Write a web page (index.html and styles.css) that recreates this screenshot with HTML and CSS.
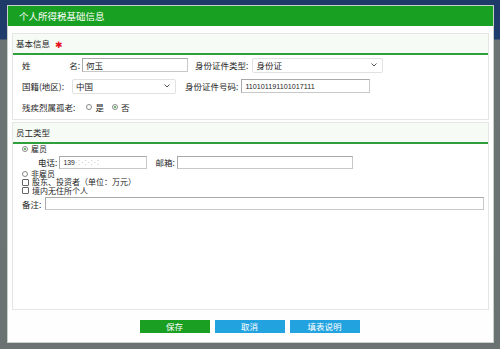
FILE: index.html
```html
<!DOCTYPE html>
<html lang="zh">
<head>
<meta charset="utf-8">
<title>个人所得税基础信息</title>
<link rel="stylesheet" href="styles.css">
</head>
<body>
<div class="dialog">
  <div class="dlg-head">个人所得税基础信息</div>
  <div class="dlg-body">
    <section class="panel panel-basic">
      <div class="panel-title">基本信息 <span class="req">✱</span></div>
      <div class="panel-content">
        <div class="row">
          <span class="lbl lbl-name"><span>姓</span><span>名:</span></span>
          <span class="field f-name">何玉</span>
          <span class="lbl lbl-idtype">身份证件类型:</span>
          <span class="select s-idtype">身份证<svg class="chev" width="6" height="4" viewBox="0 0 6 4"><path d="M0.5 0.5 L3 3 L5.5 0.5" fill="none" stroke="#555" stroke-width="1"/></svg></span>
        </div>
        <div class="row">
          <span class="lbl lbl-country">国籍(地区):</span>
          <span class="select s-country">中国<svg class="chev" width="6" height="4" viewBox="0 0 6 4"><path d="M0.5 0.5 L3 3 L5.5 0.5" fill="none" stroke="#555" stroke-width="1"/></svg></span>
          <span class="lbl lbl-idno">身份证件号码:</span>
          <span class="field f-idno num">110101191101017111</span>
        </div>
        <div class="row">
          <span class="lbl">残疾烈属孤老:</span>
          <span class="opt opt-first"><span class="radio"></span>是</span>
          <span class="opt"><span class="radio on"></span>否</span>
        </div>
      </div>
    </section>
    <section class="panel panel-emp">
      <div class="panel-title">员工类型</div>
      <div class="panel-content">
        <div class="line"><span class="radio on"></span>雇员</div>
        <div class="row row-contact">
          <span class="lbl">电话:</span>
          <span class="field f-phone"><span class="num">139</span><span class="blur">·:·:·:·:</span></span>
          <span class="lbl lbl-mail">邮箱:</span>
          <span class="field f-mail"></span>
        </div>
        <div class="line line-gap"><span class="radio"></span>非雇员</div>
        <div class="line"><span class="check"></span>股东、投资者（单位：万元）</div>
        <div class="line"><span class="check"></span>境内无住所个人</div>
        <div class="row row-note">
          <span class="lbl">备注:</span>
          <span class="field f-note"></span>
        </div>
      </div>
    </section>
    <div class="actions">
      <span class="btn btn-save">保存</span>
      <span class="btn btn-blue">取消</span>
      <span class="btn btn-blue">填表说明</span>
    </div>
  </div>
</div>
</body>
</html>
```
FILE: styles.css
```css
* { box-sizing: border-box; }
html, body { margin: 0; padding: 0; }
body {
  width: 500px;
  height: 349px;
  overflow: hidden;
  background: linear-gradient(to bottom, #1d3a68 0, #1f3d6c 39px, #6b7373 40px, #6a7272 100%);
  font-family: "Noto Sans CJK SC", "Liberation Sans", sans-serif;
  font-size: 8.5px;
  color: #262626;
  padding: 5px 0 0 7px;
}
.dialog {
  width: 487px;
  height: 338px;
  background: #fff;
  border: 1px solid #c9cfc9;
  display: flex;
  flex-direction: column;
}
.dlg-head {
  height: 20px;
  background: #17a021;
  color: #fff;
  font-size: 9.5px;
  line-height: 20px;
  padding-left: 11px;
  flex: none;
}
.dlg-body {
  flex: 1;
  display: flex;
  flex-direction: column;
  padding: 7px 4px 0 4px;
  background: #fefefe;
}
.panel {
  border: 1px solid #e3e6e3;
  background: #fff;
  display: flex;
  flex-direction: column;
}
.panel-basic { height: 87px; flex: none; }
.panel-emp { margin-top: 2px; flex: 1; }
.panel-title {
  height: 21px;
  background: #f6fbf6;
  border-bottom: 2px solid #2e9f3a;
  padding-left: 3px;
  line-height: 19px;
  flex: none;
}
.req { color: #e8101a; font-size: 9px; margin-left: 3px; position: relative; top: 1px; }
.panel-content { padding: 3px 0 0 9px; }
.row {
  display: flex;
  align-items: center;
  height: 14px;
  margin-bottom: 7px;
}
.lbl { white-space: nowrap; }
.lbl-name { display: flex; justify-content: space-between; width: 58px; }
.lbl-country { width: 50px; }
.field {
  display: flex;
  align-items: center;
  height: 14px;
  border: 1px solid #a9a9a9;
  border-right-color: #c8c8c8;
  border-bottom-color: #c8c8c8;
  background: #fff;
  padding: 0 3px;
  white-space: nowrap;
}
.num { font-family: "Liberation Sans", sans-serif; font-size: 6.8px; }
.f-name { margin-left: 2px; width: 106px; }
.lbl-idtype { margin-left: 7px; }
.select {
  display: flex;
  align-items: center;
  justify-content: space-between;
  height: 15px;
  border: 1px solid #e1e1e1;
  border-radius: 2px;
  background: #fff;
  padding: 0 5px 0 3px;
}
.chev { flex: none; }
.s-idtype { margin-left: 4px; width: 131px; }
.s-country { width: 104px; }
.lbl-idno { margin-left: 9px; }
.f-idno { margin-left: 3px; width: 129px; font-size: 7.2px; }
.opt { display: flex; align-items: center; margin-left: 8px; }
.opt-first { margin-left: 11px; }
.radio {
  width: 6px; height: 6px;
  border: 1px solid #888;
  border-radius: 50%;
  margin-right: 3px;
  background: #fff;
  position: relative;
  flex: none;
}
.radio.on::after {
  content: "";
  position: absolute;
  left: 1px; top: 1px;
  width: 2px; height: 2px;
  border-radius: 50%;
  background: #3b9a3b;
}
.check {
  width: 7px; height: 7px;
  border: 1px solid #666;
  border-radius: 1px;
  margin-right: 3px;
  background: #fff;
  flex: none;
}
.panel-emp .panel-content { padding: 1px 0 0 9px; }
.line {
  display: flex;
  align-items: center;
  height: 8.5px;
  line-height: 8.5px;
  font-size: 8px;
  white-space: nowrap;
}
.line-gap { margin-top: 1px; }
.row-contact { padding-left: 16px; margin: 2px 0 0; height: 13px; }
.row-contact .field { height: 13px; }
.f-phone { margin-left: 2px; width: 88px; }
.blur { color: #c4c4c4; letter-spacing: 0.5px; font-family: "Liberation Sans", sans-serif; }
.lbl-mail { margin-left: 8px; }
.f-mail { margin-left: 2px; width: 176px; }
.row-note { margin-top: 2px; height: 13px; }
.f-note { margin-left: 4px; width: 439px; height: 13px; }
.actions {
  flex: none;
  display: flex;
  justify-content: center;
  gap: 5px;
  padding: 10px 0 9px 0;
  margin-left: -2px;
}
.btn {
  width: 70px;
  height: 13px;
  line-height: 13px;
  text-align: center;
  color: #fff;
  font-size: 8.5px;
}
.btn-save { background: #1a9f22; }
.btn-blue { background: #22a3df; }
```
